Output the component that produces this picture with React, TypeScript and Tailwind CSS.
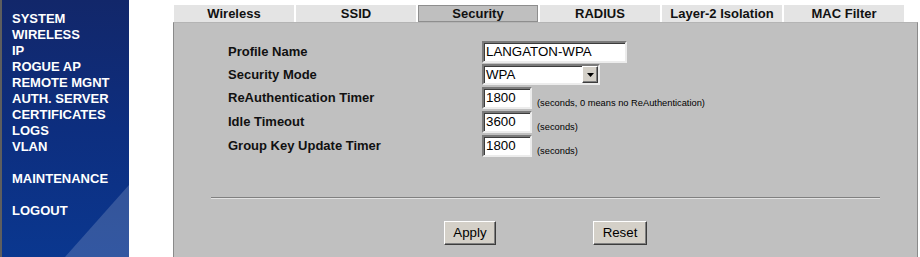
import React from "react";

const menuGroups = [
  ["SYSTEM", "WIRELESS", "IP", "ROGUE AP", "REMOTE MGNT", "AUTH. SERVER", "CERTIFICATES", "LOGS", "VLAN"],
  ["MAINTENANCE"],
  ["LOGOUT"],
];

const tabs = ["Wireless", "SSID", "Security", "RADIUS", "Layer-2 Isolation", "MAC Filter"];

const inset =
  "border-2 border-t-[#7a7a7a] border-l-[#7a7a7a] border-b-[#ececec] border-r-[#ececec] shadow-[inset_1px_1px_0_#3c3c3c] bg-white";
const raised =
  "border border-t-white border-l-white border-b-[#3c3c3c] border-r-[#3c3c3c] shadow-[inset_-1px_-1px_0_#808080] bg-[#d4d0c8]";

function TextBox({ value, width }: { value: string; width: string }) {
  return (
    <div className={`${inset} ${width} h-[22px] flex items-center px-[2px] text-[13.3px] text-black leading-none`}>
      {value}
    </div>
  );
}

function Hint({ children }: { children: React.ReactNode }) {
  return <span className="ml-[5px] text-[9.3px] leading-[12px] text-black">{children}</span>;
}

export default function App() {
  const rows: { label: string; h: string; field: React.ReactNode }[] = [
    { label: "Profile Name", h: "h-[23px]", field: <TextBox value="LANGATON-WPA" width="w-[145px]" /> },
    {
      label: "Security Mode",
      h: "h-[23px]",
      field: (
        <div className={`${inset} w-[118px] h-[21px] flex items-stretch`}>
          <span className="flex-1 flex items-center px-[2px] text-[13.3px] leading-none text-black">WPA</span>
          <span className={`${raised} w-[16px] flex items-center justify-center`}>
            <svg width="7" height="4" viewBox="0 0 7 4">
              <polygon points="0,0 7,0 3.5,4" fill="#000" />
            </svg>
          </span>
        </div>
      ),
    },
    {
      label: "ReAuthentication Timer",
      h: "h-[24px]",
      field: (
        <div className="flex items-end">
          <TextBox value="1800" width="w-[50px]" />
          <Hint>(seconds, 0 means no ReAuthentication)</Hint>
        </div>
      ),
    },
    {
      label: "Idle Timeout",
      h: "h-[24px]",
      field: (
        <div className="flex items-end">
          <TextBox value="3600" width="w-[50px]" />
          <Hint>(seconds)</Hint>
        </div>
      ),
    },
    {
      label: "Group Key Update Timer",
      h: "h-[24px]",
      field: (
        <div className="flex items-end">
          <TextBox value="1800" width="w-[50px]" />
          <Hint>(seconds)</Hint>
        </div>
      ),
    },
  ];

  return (
    <div className="flex h-[257px] overflow-hidden bg-white font-['Liberation_Sans',Arial,sans-serif]">
      {/* left navigation */}
      <nav className="relative w-[129px] shrink-0 border-l-2 border-[#5e5e5e] bg-gradient-to-b from-[#12276a] via-[#0d2e7f] to-[#0a378f] pt-[11px] pl-[10px]">
        <svg className="absolute bottom-0 right-0" width="64" height="72" viewBox="0 0 64 72">
          <polygon points="64,0 64,72 0,72" fill="#ffffff" fillOpacity="0.17" />
        </svg>
        <div className="relative flex flex-col gap-[16px]">
          {menuGroups.map((group, gi) => (
            <ul key={gi}>
              {group.map((item) => (
                <li key={item} className="text-[13px] leading-[16px] font-bold text-white">
                  {item}
                </li>
              ))}
            </ul>
          ))}
        </div>
      </nav>

      {/* content */}
      <main className="flex flex-col pl-[44px] pt-[5px]">
        <div className="flex gap-[2px] ml-[1px]">
          {tabs.map((tab) =>
            tab === "Security" ? (
              <div
                key={tab}
                className="w-[120px] h-[17px] border border-[#8e8e8e] bg-[#bfbfbf] text-center text-[13px] leading-[15px] font-bold text-[#111]"
              >
                {tab}
              </div>
            ) : (
              <div key={tab} className="w-[120px] h-[17px] bg-[#e4e4e4] text-center text-[13px] leading-[17px] font-bold text-[#111]">
                {tab}
              </div>
            )
          )}
        </div>

        <section className="flex-1 w-[745px] bg-[#c0c0c0] border-l border-r border-[#8a8a8a] border-t border-t-[#b4b4b4] pt-[18px]">
          <div className="pl-[54px]">
            {rows.map((row) => (
              <div key={row.label} className={`flex items-start ${row.h}`}>
                <div className="w-[254px] h-[22px] flex items-center text-[13px] font-bold text-[#111]">{row.label}</div>
                {row.field}
              </div>
            ))}
          </div>

          <div className="mx-[37px] mt-[38px] border-t border-[#808080] border-b border-b-[#e2e2e2]" />

          <div className="flex justify-center gap-[97px] mt-[22px]">
            <button className={`${raised} w-[52px] h-[24px] text-[13.3px] text-black`}>Apply</button>
            <button className={`${raised} w-[54px] h-[24px] text-[13.3px] text-black`}>Reset</button>
          </div>
        </section>
      </main>
    </div>
  );
}
